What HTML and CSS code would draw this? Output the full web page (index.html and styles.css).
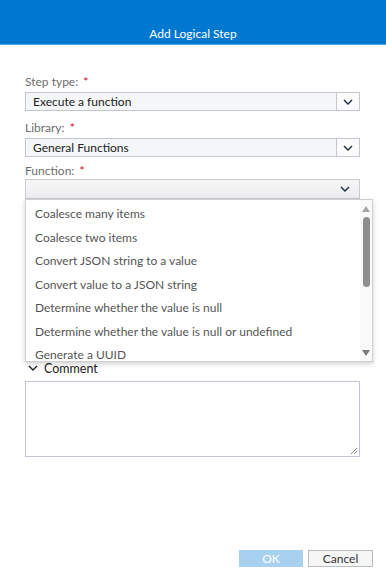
FILE: index.html
```html
<!DOCTYPE html>
<html>
<head>
<meta charset="utf-8">
<link rel="stylesheet" href="styles.css">
</head>
<body>
<div class="dialog">
  <div class="header"><span class="title">Add Logical Step</span></div>
  <div class="content">
    <div class="field">
      <div class="label">Step type: <span class="req">*</span></div>
      <div class="select">
        <div class="value">Execute a function</div>
        <div class="btn"><svg width="10" height="6" viewBox="0 0 10 6"><path d="M1 1 L5 5 L9 1" fill="none" stroke="#1d2b45" stroke-width="1.4"/></svg></div>
      </div>
    </div>
    <div class="field second">
      <div class="label">Library: <span class="req">*</span></div>
      <div class="select">
        <div class="value">General Functions</div>
        <div class="btn"><svg width="10" height="6" viewBox="0 0 10 6"><path d="M1 1 L5 5 L9 1" fill="none" stroke="#1d2b45" stroke-width="1.4"/></svg></div>
      </div>
    </div>
    <div class="field fn">
      <div class="label">Function: <span class="req">*</span></div>
      <div class="combo">
        <svg class="carrow" width="10" height="6" viewBox="0 0 10 6"><path d="M1 1 L5 5 L9 1" fill="none" stroke="#1d2b45" stroke-width="1.4"/></svg>
      </div>
      <div class="list">
        <div class="items">
          <div class="item">Coalesce many items</div>
          <div class="item">Coalesce two items</div>
          <div class="item">Convert JSON string to a value</div>
          <div class="item">Convert value to a JSON string</div>
          <div class="item">Determine whether the value is null</div>
          <div class="item">Determine whether the value is null or undefined</div>
          <div class="item">Generate a UUID</div>
        </div>
        <div class="scrollbar">
          <div class="up"></div>
          <div class="thumb"></div>
          <div class="track"></div>
          <div class="down"></div>
        </div>
      </div>
    </div>
    <div class="comment">
      <svg width="10" height="7" viewBox="0 0 10 7"><path d="M1 1 L5 5 L9 1" fill="none" stroke="#222" stroke-width="1.4"/></svg>
      <span>Comment</span>
    </div>
    <div class="textarea"><svg class="grip" width="6" height="6" viewBox="0 0 6 6"><path d="M0 6 L6 0 M3 6 L6 3" stroke="#777" stroke-width="0.9"/></svg></div>
  </div>
  <div class="footer">
    <div class="ok">OK</div>
    <div class="cancel">Cancel</div>
  </div>
</div>
</body>
</html>
```
FILE: styles.css
```css
* { box-sizing: border-box; }
html, body { margin: 0; padding: 0; background: #fff; }
body { font-family: Lato, "Noto Sans", sans-serif; font-size: 12px; color: #333; width: 386px; height: 580px; overflow: hidden; }
.dialog { display: flex; flex-direction: column; height: 580px; }
.header {
  height: 45px;
  background: #0078cf;
  border-bottom: 1px solid #4fa3e3;
  display: flex;
  align-items: flex-end;
  justify-content: center;
  padding-bottom: 3px;
}
.title { color: #fff; font-size: 12px; }
.content { padding: 30px 26px 0 25px; flex: 1; }
.field { margin-bottom: 10px; }
.field.second { margin-bottom: 7px; }
.label { color: #6d6d6d; font-size: 12px; line-height: 14px; height: 15px; margin-bottom: 2px; }
.req { color: #d0021b; margin-left: 2px; }
.select { display: flex; height: 19px; }
.value {
  flex: 1;
  background: #f5f6f8;
  border: 1px solid #c3c6cd;
  border-right: none;
  padding-left: 7px;
  line-height: 17px;
  color: #222;
  font-size: 12px;
}
.btn {
  width: 24px;
  background: #fbfbfc;
  border: 1px solid #c3c6cd;
  display: flex;
  align-items: center;
  justify-content: center;
}
.fn { position: relative; margin-bottom: 0; }
.fn .label { margin-bottom: 0; }
.combo {
  height: 20px;
  background: linear-gradient(#f7f7f8, #ececee);
  border: 1px solid #c9cbd0;
  position: relative;
}
.carrow { position: absolute; right: 9px; top: 6px; }
.list {
  position: absolute;
  left: 0;
  top: 35px;
  width: 348px;
  height: 163px;
  background: #fff;
  border: 1px solid #d0d0d0;
  box-shadow: 0 2px 5px rgba(0,0,0,0.18);
  display: flex;
  z-index: 5;
}
.items { flex: 1; padding-top: 2px; overflow: hidden; }
.item { height: 23.5px; line-height: 23.5px; padding-left: 9px; color: #555; font-size: 12px; white-space: nowrap; }
.scrollbar { width: 12px; background: #fafafa; display: flex; flex-direction: column; align-items: center; padding: 6px 0 5px; }
.up { width: 0; height: 0; border-left: 4px solid transparent; border-right: 4px solid transparent; border-bottom: 6px solid #a5a5a5; }
.thumb { width: 7px; height: 70px; background: #8f8f8f; border-radius: 4px; margin-top: 5px; }
.track { flex: 1; }
.down { width: 0; height: 0; border-left: 4px solid transparent; border-right: 4px solid transparent; border-top: 6px solid #7a7a7a; }
.comment { margin-top: 162px; display: flex; align-items: center; gap: 6px; height: 14px; padding-left: 3px; color: #222; font-size: 12.5px; }
.textarea { margin-top: 6px; height: 76px; border: 1px solid #c3c6d2; position: relative; }
.grip { position: absolute; right: 2px; bottom: 2px; }
.footer { display: flex; justify-content: flex-end; gap: 5px; padding: 0 13px 13px 0; }
.ok { width: 64px; height: 17px; background: #a8d0ef; color: #fff; text-align: center; line-height: 17px; font-size: 12px; }
.cancel { width: 65px; height: 17px; background: #f6f6f7; border: 1px solid #b9bcc3; color: #333; text-align: center; line-height: 15px; font-size: 12px; }
```
